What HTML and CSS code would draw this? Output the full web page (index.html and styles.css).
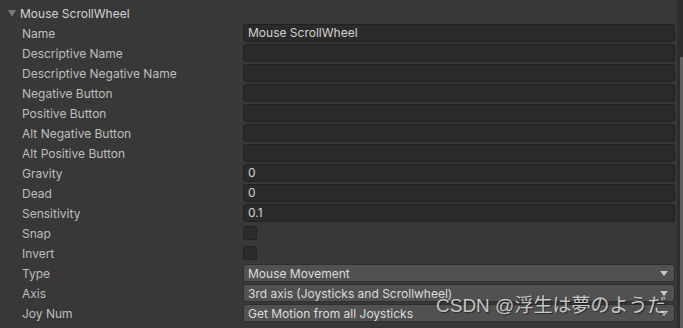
FILE: index.html
```html
<html>
<head>
  <meta charset="utf-8">
  <title>Input Manager</title>
  <link rel="stylesheet" href="styles.css">
</head>
<body>
  <div class="window">
    <div class="inspector">
      <div class="foldout">
        <span class="fold-arrow"></span>
        <span>Mouse ScrollWheel</span>
      </div>

      <div class="row"><span class="label">Name</span><div class="field">Mouse ScrollWheel</div></div>
      <div class="row"><span class="label">Descriptive Name</span><div class="field"></div></div>
      <div class="row"><span class="label">Descriptive Negative Name</span><div class="field"></div></div>
      <div class="row"><span class="label">Negative Button</span><div class="field"></div></div>
      <div class="row"><span class="label">Positive Button</span><div class="field"></div></div>
      <div class="row"><span class="label">Alt Negative Button</span><div class="field"></div></div>
      <div class="row"><span class="label">Alt Positive Button</span><div class="field"></div></div>
      <div class="row"><span class="label">Gravity</span><div class="field">0</div></div>
      <div class="row"><span class="label">Dead</span><div class="field">0</div></div>
      <div class="row"><span class="label">Sensitivity</span><div class="field">0.1</div></div>
      <div class="row"><span class="label">Snap</span><div class="checkbox"></div></div>
      <div class="row"><span class="label">Invert</span><div class="checkbox"></div></div>
      <div class="row"><span class="label">Type</span><div class="dropdown">Mouse Movement<span class="caret"></span></div></div>
      <div class="row"><span class="label">Axis</span><div class="dropdown">3rd axis (Joysticks and Scrollwheel)<span class="caret"></span></div></div>
      <div class="row"><span class="label">Joy Num</span><div class="dropdown">Get Motion from all Joysticks<span class="caret"></span></div></div>
    </div>

    <div class="scrollbar">
      <div class="scroll-gap"></div>
      <div class="scroll-thumb"></div>
    </div>
  </div>

  <div class="watermark">CSDN @浮生は夢のようだ</div>
</body>
</html>
```

FILE: styles.css
```css
body {
  margin: 0;
  background: #383838;
  font-family: Inter, "Noto Sans", sans-serif;
  font-size: 12px;
  color: #bebebe;
  overflow: hidden;
}
.window {
  display: flex;
  height: 328px;
}
.inspector {
  flex: 1;
  padding: 3px 2px 0 0;
}
.foldout {
  display: flex;
  align-items: center;
  height: 20px;
  padding-left: 8px;
  color: #d2d2d2;
}
.fold-arrow {
  width: 0;
  height: 0;
  border-left: 4px solid transparent;
  border-right: 4px solid transparent;
  border-top: 7px solid #7a7a7a;
  margin-right: 4px;
  margin-top: 1px;
}
.row {
  display: flex;
  align-items: center;
  height: 20px;
}
.label {
  width: 221px;
  padding-left: 22px;
  flex-shrink: 0;
}
.field {
  flex: 1;
  height: 16px;
  line-height: 16px;
  padding: 0 4px;
  background: #2a2a2a;
  border: 1px solid #212121;
  border-radius: 3px;
  color: #d2d2d2;
}
.checkbox {
  width: 12px;
  height: 12px;
  background: #2b2b2b;
  border: 1px solid #232323;
  border-radius: 2px;
}
.dropdown {
  flex: 1;
  display: flex;
  align-items: center;
  justify-content: space-between;
  height: 16px;
  padding: 0 6px 0 4px;
  background: #515151;
  border: 1px solid #2f2f2f;
  border-radius: 3px;
  color: #dcdcdc;
}
.caret {
  width: 0;
  height: 0;
  border-left: 4px solid transparent;
  border-right: 4px solid transparent;
  border-top: 5px solid #c8c8c8;
}
.scrollbar {
  width: 6px;
  display: flex;
  flex-direction: column;
  background: #2e2e2e;
}
.scroll-gap {
  height: 57px;
}
.scroll-thumb {
  flex: 1;
  margin-left: 3px;
  background: #5f5f5f;
}
.watermark {
  position: absolute;
  left: 436px;
  top: 293px;
  font-family: "Liberation Sans", "Noto Sans CJK JP", sans-serif;
  font-size: 19px;
  line-height: 26px;
  color: rgba(225, 225, 225, 0.85);
  text-shadow: 1px 1px 1px rgba(0, 0, 0, 0.5);
}
```
